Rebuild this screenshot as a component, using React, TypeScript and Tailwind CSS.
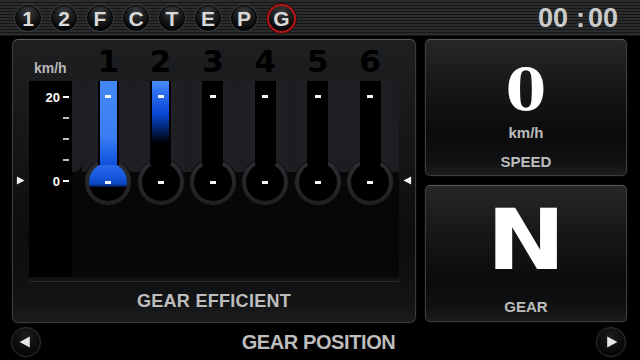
import React from "react";

const MODES = ["1", "2", "F", "C", "T", "E", "P", "G"];
const ACTIVE_MODE = "G";

type Level = "full" | "half" | "none";
const GEARS: { n: string; level: Level }[] = [
  { n: "1", level: "full" },
  { n: "2", level: "half" },
  { n: "3", level: "none" },
  { n: "4", level: "none" },
  { n: "5", level: "none" },
  { n: "6", level: "none" },
];

const font = "font-['Liberation_Sans',Arial,sans-serif]";

const Triangle = ({ dir, size = 9, color = "#f2f2f2" }: { dir: "left" | "right"; size?: number; color?: string }) => (
  <svg width={size} height={size} viewBox="0 0 10 10">
    {dir === "right" ? <path d="M1 0.5 L9.5 5 L1 9.5 Z" fill={color} /> : <path d="M9 0.5 L0.5 5 L9 9.5 Z" fill={color} />}
  </svg>
);

const ModeButton = ({ label }: { label: string }) => {
  const active = label === ACTIVE_MODE;
  return (
    <div
      className={`flex shrink-0 items-center justify-center rounded-full ${
        active
          ? "h-[29px] w-[29px] border-2 border-[#b31616] shadow-[0_0_0_1px_#3a0a0a]"
          : "h-[26px] w-[26px] border border-[#050505] shadow-[0_0_0_1px_#3b3c3e]"
      } bg-[radial-gradient(circle_at_50%_25%,#3c3d40_0%,#1a1b1d_45%,#050505_80%)]`}
    >
      <span className="text-[21px] font-bold leading-none text-[#d9d9d9]">{label}</span>
    </div>
  );
};

const RoundButton = ({ dir }: { dir: "left" | "right" }) => (
  <div className="flex h-[30px] w-[30px] items-center justify-center rounded-full border border-[#2f3032] bg-[radial-gradient(circle_at_50%_30%,#1c1d1f_0%,#0a0a0b_60%,#000_100%)] shadow-[0_0_0_1px_#0a0a0a]">
    <span className={dir === "left" ? "-ml-[2px]" : "ml-[2px]"}>
      <Triangle dir={dir} size={12} color="#e6e6e6" />
    </span>
  </div>
);

const Tube = ({ level }: { level: Level }) => {
  let fill = "";
  if (level === "full") fill = "h-full bg-[linear-gradient(to_bottom,#4387f6_0%,#3b7ef2_65%,#1a5ee6_90%,#0f4fd8_100%)]";
  if (level === "half") fill = "h-[62px] bg-[linear-gradient(to_bottom,#4b8cf7_0%,#2466ec_25%,#0a46d0_55%,#02205e_80%,#000_100%)]";
  return (
    <div className="relative z-10 h-[84px] w-[21px] shrink-0 self-start bg-black px-[2px]">
      <div className="relative h-full w-full bg-black">
        {fill ? <div className={`w-full ${fill}`} /> : null}
        <div className="absolute left-[5.5px] top-[14px] h-[3px] w-[6px] bg-[#f4f4f4]" />
      </div>
    </div>
  );
};

const Bulb = ({ level }: { level: Level }) => (
  <div className="-mt-[13px] h-[46px] w-[46px] rounded-full bg-[linear-gradient(to_bottom,#2c2d30,#1f2022)] p-[4px] shadow-[0_0_0_1px_#0c0c0d]">
    <div
      className={`flex h-full w-full items-center justify-center overflow-hidden rounded-full ${
        level === "full"
          ? "bg-[linear-gradient(to_bottom,#2c6dec_0%,#1859e0_35%,#0b46c4_55%,#062c86_60%,#000_64%)]"
          : "bg-black"
      }`}
    >
      <div className="h-[3px] w-[6px] bg-[#f4f4f4]" />
    </div>
  </div>
);

const GearColumn = ({ level }: { level: Level }) => (
  <div className="flex w-[52.4px] shrink-0 flex-col items-center">
    <div className="flex h-[91px] w-full">
      <div className="h-full flex-1 rounded-br-[8px] bg-[linear-gradient(to_right,#1c1d20,#202124)]" />
      <Tube level={level} />
      <div className="h-full flex-1 rounded-bl-[8px] bg-[linear-gradient(to_right,#202124,#1c1d20)]" />
    </div>
    <Bulb level={level} />
  </div>
);

const ScaleRow = ({ label, major }: { label?: string; major: boolean }) => (
  <div className="flex h-[21px] items-center justify-end gap-[3px]">
    {label ? <span className="text-[13px] font-bold leading-none text-white">{label}</span> : null}
    <div className={`h-[2px] w-[6px] ${major ? "bg-white" : "bg-[#bdbdbd]"}`} />
  </div>
);

const GearEfficientPanel = () => (
  <div className="flex h-[284px] w-[404px] shrink-0 flex-col rounded-[6px] border border-[#3a3b3e] border-t-[#5b5c5f] bg-[linear-gradient(to_bottom,#1e1f21_0%,#17181a_30%,#0d0d0e_70%,#121314_92%,#1b1c1d_100%)] shadow-[0_0_0_1px_#080808]">
    <div className="flex h-[41px] px-[16px]">
      <div className="flex w-[43px] items-end pb-[2px] pl-[5px]">
        <span className="text-[14px] font-bold text-[#b8b8b8]">km/h</span>
      </div>
      <div className="w-[10px]" />
      {GEARS.map((g) => (
        <div key={g.n} className="flex w-[52.4px] items-end justify-center pb-[4px]">
          <span className="font-['DejaVu_Sans',sans-serif] text-[31px] font-bold leading-none text-black">{g.n}</span>
        </div>
      ))}
    </div>

    <div className="flex h-[196px]">
      <div className="flex w-[16px] justify-center pt-[95px]">
        <Triangle dir="right" size={9} />
      </div>
      <div className="flex w-[371px] bg-[#070707]">
        <div className="flex w-[43px] flex-col bg-black pr-[3px] pt-[5.5px]">
          <ScaleRow label="20" major />
          <ScaleRow major={false} />
          <ScaleRow major={false} />
          <ScaleRow major={false} />
          <ScaleRow label="0" major />
        </div>
        <div className="h-[91px] w-[10px] rounded-br-[8px] bg-[#1d1e21]" />
        {GEARS.map((g) => (
          <GearColumn key={g.n} level={g.level} />
        ))}
        <div className="h-[91px] flex-1 rounded-bl-[8px] bg-[#1d1e21]" />
      </div>
      <div className="flex w-[16px] justify-center pt-[95px]">
        <Triangle dir="left" size={9} />
      </div>
    </div>

    <div className="mx-[16px] mt-[4px] h-px bg-[#2a2b2d]" />
    <div className="flex flex-1 items-center justify-center pb-[2px]">
      <span className="text-[18px] font-bold tracking-[0.3px] text-[#bdbdbd]">GEAR EFFICIENT</span>
    </div>
  </div>
);

const InfoPanel = ({ children }: { children: React.ReactNode }) => (
  <div className="flex h-[137px] w-[202px] flex-col items-center rounded-[5px] border border-[#3d3e41] border-t-[#5a5b5e] bg-[linear-gradient(to_bottom,#262729_0%,#161719_35%,#0b0b0c_70%,#101112_90%,#1c1d1e_100%)] shadow-[0_0_0_1px_#080808]">
    {children}
  </div>
);

export default function App() {
  return (
    <div className={`flex h-[360px] w-[640px] flex-col overflow-hidden bg-black ${font}`}>
      <div className="flex h-[36px] shrink-0 items-center gap-[10px] bg-[repeating-linear-gradient(to_bottom,#2b2c2e_0px,#2b2c2e_2px,#141516_2px,#141516_3px)] pl-[15px] pr-[22px]">
        {MODES.map((m) => (
          <ModeButton key={m} label={m} />
        ))}
        <div className="ml-auto flex items-center text-[27px] font-bold leading-none text-[#cacaca]">
          <span>00</span>
          <span className="ml-[8px] mr-[3px]">:</span>
          <span>00</span>
        </div>
      </div>

      <div className="flex shrink-0 gap-[9px] pl-[12px] pt-[3px]">
        <GearEfficientPanel />
        <div className="flex flex-col gap-[9px]">
          <InfoPanel>
            <span className="mt-[21px] font-['DejaVu_Serif',serif] text-[58px] font-bold leading-none text-white">0</span>
            <span className="mt-[6px] text-[15px] font-bold leading-none text-[#bcbcbc]">km/h</span>
            <span className="mt-[14px] text-[15px] font-bold leading-none text-[#bcbcbc]">SPEED</span>
          </InfoPanel>
          <InfoPanel>
            <span className="mt-[12px] scale-x-[1.12] font-['DejaVu_Sans',sans-serif] text-[84px] font-bold leading-none text-white">N</span>
            <span className="mt-[17px] text-[15px] font-bold leading-none text-[#bcbcbc]">GEAR</span>
          </InfoPanel>
        </div>
      </div>

      <div className="flex flex-1 items-center pl-[11px] pr-[14px]">
        <RoundButton dir="left" />
        <div className="flex flex-1 justify-center">
          <span className="text-[20px] font-bold tracking-[-0.4px] text-[#bdbdbd]">GEAR POSITION</span>
        </div>
        <RoundButton dir="right" />
      </div>
    </div>
  );
}
